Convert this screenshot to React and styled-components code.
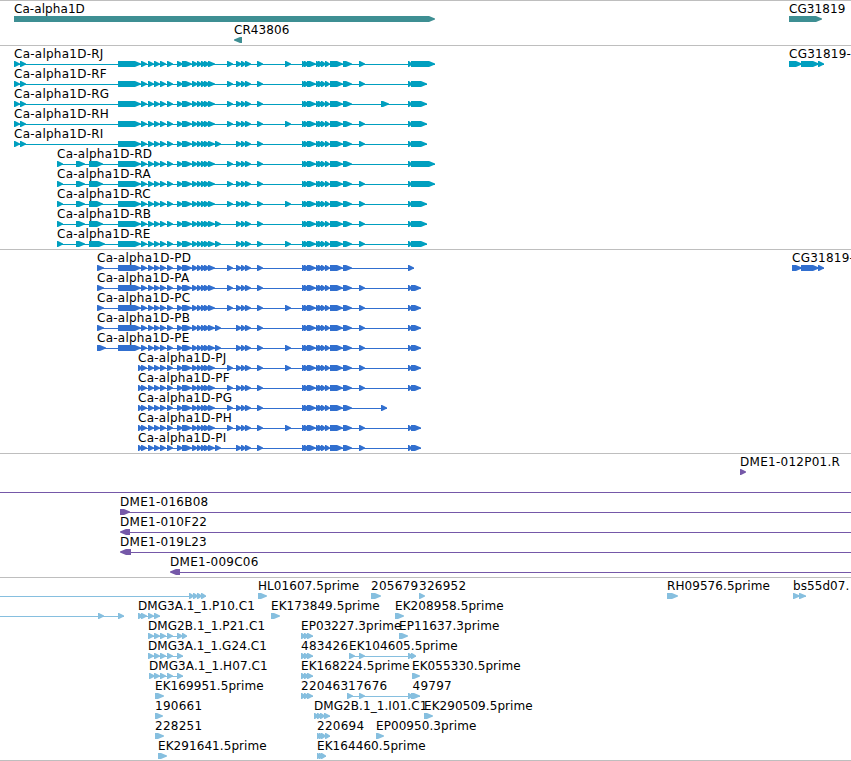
import React from "react";
import styled, { createGlobalStyle } from "styled-components";

const WIDTH = 851;

// shared exons, [start, end] in px of the visible region
const BIG = [118, 141];
const EARLY = [
  [141, 147], [148, 154], [154, 160], [160, 166], [167, 173], [177, 183],
  [182, 192], [192, 198], [197, 202], [201, 206], [204, 210], [208, 215],
];
const MIDDLE = [[236, 242], [241, 246], [245, 251], [257, 263]];
const LATE = [
  [302, 306], [304, 309], [307, 316], [316, 320], [318, 323], [321, 326],
  [325, 330], [330, 343], [343, 352],
];

const HEADS = {
  long: [[14, 20], [20, 26], BIG],
  short: [[57, 63], [76, 85], [89, 103], BIG],
  shortE: [[57, 63], [76, 85], [89, 105], BIG],
  protein: [[97, 104], BIG],
  proteinE: [[97, 106], BIG],
  proteinShort: [[138, 142]],
};

// opts: a = 215 exon instead of 227, b = 285 exon, c = 359 exon
function gene(label, x, head, opts, tail) {
  return {
    labels: [[x, label]],
    groups: [
      [
        ...HEADS[head],
        ...EARLY,
        opts.includes("a") ? [215, 221] : [227, 233],
        ...MIDDLE,
        ...(opts.includes("b") ? [[285, 291]] : []),
        ...LATE,
        ...(opts.includes("c") ? [[359, 365]] : []),
        ...tail,
      ],
    ],
  };
}

const end = (to) => [[408, 412], [411, to]];

const genes = [
  {
    labels: [[14, "Ca-alpha1D"], [789, "CG31819"]],
    groups: [[[14, 435]], [[789, 822]]],
  },
  { labels: [[234, "CR43806"]], groups: [[[242, 234]]] },
];

const transcripts = [
  gene("Ca-alpha1D-RJ", 14, "long", "bc", end(435)),
  gene("Ca-alpha1D-RF", 14, "long", "c", end(427)),
  gene("Ca-alpha1D-RG", 14, "long", "", [[381, 389], ...end(427)]),
  gene("Ca-alpha1D-RH", 14, "long", "bc", end(427)),
  gene("Ca-alpha1D-RI", 14, "long", "ac", end(427)),
  gene("Ca-alpha1D-RD", 57, "short", "", end(435)),
  gene("Ca-alpha1D-RA", 57, "short", "c", end(435)),
  gene("Ca-alpha1D-RC", 57, "short", "bc", end(427)),
  gene("Ca-alpha1D-RB", 57, "short", "ac", end(427)),
  gene("Ca-alpha1D-RE", 57, "shortE", "abc", end(427)),
];
transcripts[0].labels.push([789, "CG31819-"]);
transcripts[0].groups.push([[789, 802], [801, 819], [818, 824]]);

const proteins = [
  gene("Ca-alpha1D-PD", 97, "protein", "", [[408, 414]]),
  gene("Ca-alpha1D-PA", 97, "protein", "c", end(421)),
  gene("Ca-alpha1D-PC", 97, "protein", "bc", end(421)),
  gene("Ca-alpha1D-PB", 97, "protein", "ac", end(421)),
  gene("Ca-alpha1D-PE", 97, "proteinE", "abc", end(421)),
  gene("Ca-alpha1D-PJ", 138, "proteinShort", "bc", end(421)),
  gene("Ca-alpha1D-PF", 138, "proteinShort", "c", end(421)),
  gene("Ca-alpha1D-PG", 138, "proteinShort", "", [[381, 387]]),
  gene("Ca-alpha1D-PH", 138, "proteinShort", "bc", end(421)),
  gene("Ca-alpha1D-PI", 138, "proteinShort", "ac", end(421)),
];
proteins[0].labels.push([792, "CG31819-"]);
proteins[0].groups.push([[792, 802], [801, 819], [818, 824]]);

const bacs = [
  { labels: [[740, "DME1-012P01.R"]], groups: [[[740, 746]]] },
  { labels: [], groups: [], lines: [[0, WIDTH]] },
  { labels: [[120, "DME1-016B08"]], groups: [[[120, 130]]], lines: [[120, WIDTH]] },
  { labels: [[120, "DME1-010F22"]], groups: [[[130, 120]]], lines: [[125, WIDTH]] },
  { labels: [[120, "DME1-019L23"]], groups: [[[131, 120]]], lines: [[125, WIDTH]] },
  { labels: [[170, "DME1-009C06"]], groups: [[[180, 170]]], lines: [[175, WIDTH]] },
];

const TRIPLE = [[301, 306], [304, 309], [307, 313]];

const ests = [
  {
    labels: [
      [258, "HL01607.5prime"], [371, "205679"], [419, "326952"],
      [667, "RH09576.5prime"], [793, "bs55d07."],
    ],
    groups: [
      [[189, 194], [193, 198], [197, 202], [201, 206]],
      [[258, 267]], [[371, 381]], [[419, 425]], [[667, 678]],
      [[793, 800], [799, 806]],
    ],
    lines: [[0, 190]],
  },
  {
    labels: [[138, "DMG3A.1_1.P10.C1"], [271, "EK173849.5prime"], [395, "EK208958.5prime"]],
    groups: [
      [[98, 104], [118, 124]],
      [[138, 143], [141, 147], [148, 154], [154, 160]],
      [[271, 280]], [[395, 404]],
    ],
    lines: [[0, 100]],
  },
  {
    labels: [[148, "DMG2B.1_1.P21.C1"], [301, "EP03227.3prime"], [399, "EP11637.3prime"]],
    groups: [
      [[148, 154], [154, 160], [160, 166], [167, 173], [177, 183], [182, 187]],
      TRIPLE, [[399, 408]],
    ],
  },
  {
    labels: [[148, "DMG3A.1_1.G24.C1"], [301, "483426"], [349, "EK104605.5prime"]],
    groups: [
      [[148, 154], [154, 160], [160, 166], [167, 173], [177, 183]],
      TRIPLE,
      [[349, 355], [359, 365], [408, 413], [411, 416]],
    ],
  },
  {
    labels: [[149, "DMG3A.1_1.H07.C1"], [301, "EK168224.5prime"], [412, "EK055330.5prime"]],
    groups: [
      [[149, 155], [154, 160], [160, 166], [167, 173], [177, 183]],
      TRIPLE, [[412, 420]],
    ],
  },
  {
    labels: [[155, "EK169951.5prime"], [301, "220463"], [348, "17676"], [412.5, "49797"]],
    groups: [
      [[155, 164]], TRIPLE,
      [[347, 353], [359, 365], [408, 413], [411, 420]],
    ],
  },
  {
    labels: [[155, "190661"], [314, "DMG2B.1_1.I01.C1"], [424, "EK290509.5prime"]],
    groups: [
      [[155, 163]],
      [[314, 319], [317, 322], [320, 325], [324, 330]],
      [[424, 433]],
    ],
  },
  {
    labels: [[155, "228251"], [317, "220694"], [376, "EP00950.3prime"]],
    groups: [
      [[155, 164]],
      [[317, 321], [319, 324], [321, 326], [325, 330]],
      [[376, 384]],
    ],
  },
  {
    labels: [[158, "EK291641.5prime"], [317, "EK164460.5prime"]],
    groups: [[[158, 167]], [[317, 321], [319, 324], [321, 326]]],
  },
];

const tracks = [
  { name: "genes", color: "#3e8f93", rowHeight: 21, rows: genes, gap: 0 },
  { name: "transcripts", color: "#009fbf", rowHeight: 20, rows: transcripts, gap: 1 },
  { name: "proteins", color: "#316fcf", rowHeight: 20, rows: proteins, gap: 1 },
  { name: "bacs", color: "#7558a8", rowHeight: 20, rows: bacs, gap: 1 },
  { name: "ests", color: "#86bfdf", rowHeight: 20, rows: ests, gap: 0 },
];

// a feature whose end is before its start points to the left
function arrowPoints([from, to]) {
  const dir = to > from ? 1 : -1;
  const neck = to - dir * Math.min(6, Math.abs(to - from) - 1);
  return `${from},13 ${neck},13 ${to},15.6 ${to},16.4 ${neck},19 ${from},19`;
}

// suffixed names and plain numbers are set a little wider
function spacing(text) {
  if (/^DME1/.test(text)) return 0.27;
  if (/-[RP]?.?$/.test(text)) return 0.25;
  if (/^\d+$/.test(text)) return 0.25;
  return 0.07;
}

function FeatureRow({ row, height }) {
  return (
    <RowCanvas width={WIDTH} height={height}>
      {(row.lines || []).map(([from, to]) => (
        <rect key={from} x={from} y="16" width={to - from} height="1" />
      ))}
      {row.groups.map((group) => {
        const first = group[0][0];
        const last = group[group.length - 1][1];
        return (
          <g key={first}>
            {group.length > 1 && <rect x={first} y="16" width={last - first} height="1" />}
            {group.map((exon) => (
              <polygon key={exon[0]} points={arrowPoints(exon)} />
            ))}
          </g>
        );
      })}
      {row.labels.map(([x, text]) => (
        <Label key={text} x={x} y="10" $spacing={spacing(text)}>
          {text}
        </Label>
      ))}
    </RowCanvas>
  );
}

export default function App() {
  return (
    <>
      <GlobalStyle />
      <Browser>
        {tracks.map((track) => (
          <Track key={track.name} $color={track.color} $gap={track.gap}>
            {track.rows.map((row, i) => (
              <FeatureRow key={i} row={row} height={track.rowHeight} />
            ))}
          </Track>
        ))}
      </Browser>
    </>
  );
}

const GlobalStyle = createGlobalStyle`
  body {
    margin: 0;
    background: #fff;
    overflow: hidden;
  }
`;

const Browser = styled.main`
  width: ${WIDTH}px;
  border-bottom: 1px solid #bebebe;
`;

const Track = styled.section`
  display: flex;
  flex-direction: column;
  padding: 2px 0 ${(props) => props.$gap}px;
  border-top: 1px solid #bebebe;
  color: ${(props) => props.$color};
`;

const RowCanvas = styled.svg`
  display: block;
  fill: currentColor;
  overflow: visible;
`;

const Label = styled.text`
  fill: #000;
  font-family: "DejaVu Sans", sans-serif;
  font-size: 12px;
  letter-spacing: ${(props) => props.$spacing}px;
`;
